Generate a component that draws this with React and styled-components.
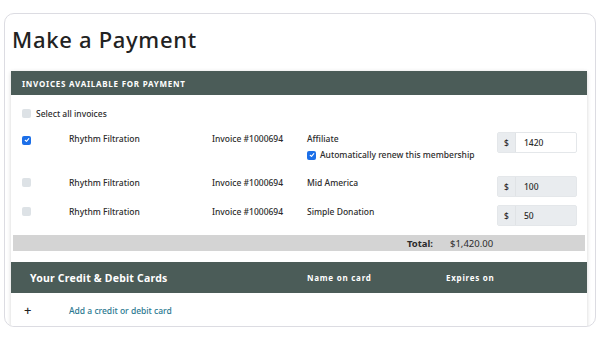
import React from "react";
import styled, { createGlobalStyle } from "styled-components";

const GlobalStyle = createGlobalStyle`
  body {
    margin: 0;
    background: #fff;
    font-family: "Noto Sans", "Liberation Sans", sans-serif;
    color: #2b2b2b;
  }
`;

const Page = styled.div`
  padding: 13px 4px 0;
`;

const Card = styled.div`
  height: 314px;
  box-sizing: border-box;
  border: 1px solid #dcdce2;
  border-radius: 10px;
  padding: 0 8px 0 6px;
  overflow: hidden;
`;

const Title = styled.h1`
  margin: 0;
  padding: 10px 0 0 1px;
  height: 47px;
  font-size: 22px;
  font-weight: 500;
  letter-spacing: 0.7px;
  color: #222;
`;

const Panel = styled.div`
  background: #fff;
  box-shadow: 0 1px 4px rgba(0, 0, 0, 0.18);
`;

const Bar = styled.div`
  background: #4b5c58;
  color: #fff;
  display: flex;
  align-items: center;
  height: ${(p) => p.$h}px;
  padding-left: ${(p) => p.$pad}px;
`;

const Caps = styled.span`
  font-size: 8px;
  font-weight: 700;
  letter-spacing: 0.75px;
`;

const SelectAll = styled.label`
  display: flex;
  align-items: center;
  gap: 5px;
  padding: 12px 0 0 11px;
  height: 12px;
  font-size: 8.5px;
  font-weight: 500;
`;

const Box = styled.span`
  width: 9px;
  height: 9px;
  border-radius: 2px;
  flex: none;
  background: ${(p) => (p.$on ? "#1c6fe8" : "#dde2e6")};
  display: inline-flex;
  align-items: center;
  justify-content: center;
`;

const Rows = styled.div`
  display: grid;
  row-gap: 8px;
  padding: 13px 10px 0 11px;
`;

const Row = styled.div`
  display: grid;
  grid-template-columns: 47px 143px 95px 1fr 80px;
  align-items: start;
  font-size: 8.5px;
  font-weight: 500;
`;

const Cell = styled.div`
  padding-top: ${(p) => p.$top ?? 1}px;
  line-height: 12px;
`;

const Renew = styled.label`
  display: flex;
  align-items: center;
  gap: 4px;
  margin: 4px 0 7px;
`;

const Amount = styled.div`
  display: flex;
  height: 21px;
  box-sizing: border-box;
  border: 1px solid #e4e7ea;
  border-radius: 2px;
  background: ${(p) => (p.$disabled ? "#e9ecef" : "#fff")};
  font-size: 8.5px;
`;

const Prefix = styled.span`
  width: 17px;
  display: flex;
  align-items: center;
  justify-content: center;
  background: #e9ecef;
  border-right: 1px solid #e0e3e6;
`;

const Value = styled.span`
  display: flex;
  align-items: center;
  padding-left: 8px;
`;

const TotalBar = styled.div`
  margin: 9px 2px 0;
  height: 16px;
  background: #d4d4d4;
  display: grid;
  grid-template-columns: 420px 1fr;
  align-items: center;
  font-size: 9.5px;
`;

const TotalLabel = styled.span`
  text-align: right;
  font-weight: 700;
`;

const TotalValue = styled.span`
  padding-left: 17px;
`;

const CardsBar = styled(Bar)`
  margin-top: 11px;
  display: grid;
  grid-template-columns: 277px 139px 1fr;
`;

const CardsTitle = styled.span`
  font-size: 10.5px;
  font-weight: 700;
  letter-spacing: 0.2px;
`;

const AddRow = styled.div`
  display: grid;
  grid-template-columns: 45px 1fr;
  align-items: center;
  height: 34px;
  padding-left: 13px;
  font-size: 8.5px;
  font-weight: 500;
`;

const Plus = styled.span`
  font-size: 13px;
  color: #222;
`;

const Link = styled.a`
  color: #2a7890;
  text-decoration: none;
`;

const Check = () => (
  <svg width="6" height="6" viewBox="0 0 10 10">
    <path d="M2 5.4 L4.2 7.4 L8 2.8" stroke="#fff" strokeWidth="1.8" fill="none" strokeLinecap="round" strokeLinejoin="round" />
  </svg>
);

const invoices = [
  { on: true, desc: "Affiliate", amount: "1420", renew: true },
  { on: false, desc: "Mid America", amount: "100", disabled: true },
  { on: false, desc: "Simple Donation", amount: "50", disabled: true },
];

export default function App() {
  return (
    <>
      <GlobalStyle />
      <Page>
        <Card>
          <Title>Make a Payment</Title>
          <Panel>
            <Bar $h={24} $pad={11}>
              <Caps>INVOICES AVAILABLE FOR PAYMENT</Caps>
            </Bar>
            <SelectAll>
              <Box />
              Select all invoices
            </SelectAll>
            <Rows>
              {invoices.map((inv, i) => (
                <Row key={i}>
                  <Cell $top={2}>
                    <Box $on={inv.on}>{inv.on && <Check />}</Box>
                  </Cell>
                  <Cell>Rhythm Filtration</Cell>
                  <Cell>Invoice #1000694</Cell>
                  <Cell>
                    {inv.desc}
                    {inv.renew && (
                      <Renew>
                        <Box $on>
                          <Check />
                        </Box>
                        Automatically renew this membership
                      </Renew>
                    )}
                  </Cell>
                  <Amount $disabled={inv.disabled}>
                    <Prefix>$</Prefix>
                    <Value>{inv.amount}</Value>
                  </Amount>
                </Row>
              ))}
            </Rows>
            <TotalBar>
              <TotalLabel>Total:</TotalLabel>
              <TotalValue>$1,420.00</TotalValue>
            </TotalBar>
            <CardsBar $h={31} $pad={19}>
              <CardsTitle>Your Credit &amp; Debit Cards</CardsTitle>
              <Caps>Name on card</Caps>
              <Caps>Expires on</Caps>
            </CardsBar>
            <AddRow>
              <Plus>+</Plus>
              <Link href="#">Add a credit or debit card</Link>
            </AddRow>
          </Panel>
        </Card>
      </Page>
    </>
  );
}
